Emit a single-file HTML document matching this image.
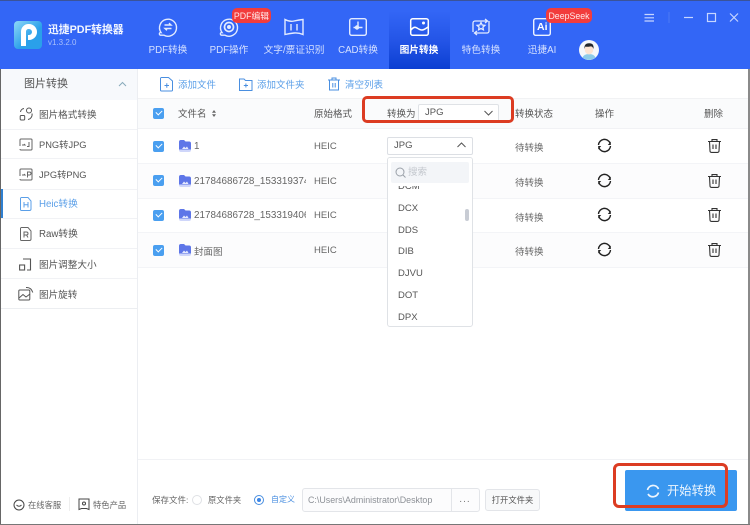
<!DOCTYPE html>
<html><head><meta charset="utf-8"><style>
html,body{margin:0;padding:0}
body{width:750px;height:525px;overflow:hidden;background:#fff;position:relative;font-family:"Liberation Sans","Noto Sans CJK SC",sans-serif;color:#555}
.a{position:absolute;white-space:nowrap}
svg{position:absolute;overflow:visible;fill:none}
.nav{position:absolute;top:44px;font-size:9.7px;line-height:14px;color:#d6e1ff;text-align:center;white-space:nowrap}
.side{position:absolute;left:39px;font-size:9.6px;line-height:14px;color:#555;white-space:nowrap}
.line{position:absolute;height:1px;background:#f1f2f5}
.cb{position:absolute;left:153px;width:11px;height:11px;background:#4a9ff0;border-radius:2px}
.cb:after{content:"";position:absolute;left:2.500px;top:2px;width:5px;height:3px;border-left:1.400px solid #fff;border-bottom:1.400px solid #fff;transform:rotate(-45deg)}
.t{position:absolute;font-size:9.500px;line-height:14px;color:#666;white-space:nowrap}
.opt{position:absolute;font-size:9.500px;line-height:14px;color:#555}
</style></head><body>

<div class="a" style="left:0;top:0;width:750px;height:69px;background:#3366f6"></div>
<div class="a" style="left:0;top:0;width:750px;height:1px;background:#3a5399"></div>
<div class="a" style="left:389px;top:1px;width:61px;height:68px;background:linear-gradient(#3366f6 15%,#2354e6 60%,#0b3fd2)"></div>

<!-- logo -->
<div class="a" style="left:14px;top:21px;width:28px;height:28px;border-radius:4px;background:linear-gradient(135deg,#8fd8f7,#2aa0ea 60%)"></div>
<svg style="left:14px;top:21px" width="28" height="28"><path d="M9.500 25V10.500a5 5 0 0 1 5-5h.5a5.500 5.500 0 0 1 0 11H14" stroke="#fff" stroke-width="5"/></svg>
<div class="a" style="left:48px;top:22px;font-size:10.800px;line-height:16px;font-weight:bold;color:#f2f6ff">迅捷PDF转换器</div>
<div class="a" style="left:48px;top:37px;font-size:8px;line-height:12px;color:#a9c0fb">v1.3.2.0</div>

<!-- nav icons -->
<svg style="left:158px;top:17px" width="20" height="20" stroke="#e3ebff" stroke-width="1.400"><path d="M3 15.500A8.500 8.500 0 1 1 6 18.200H2.500a1.200 1.200 0 0 1 .5-2.700z"/><path d="M6.500 8h6.500l-2-1.800M13.500 11.500H7l2 1.800"/></svg>
<svg style="left:219px;top:17px" width="20" height="20" stroke="#e3ebff" stroke-width="1.400"><path d="M3 15.500A8.500 8.500 0 1 1 6 18.200H2.500a1.200 1.200 0 0 1 .5-2.700z"/><circle cx="10" cy="10" r="4.500" stroke-width="1.700"/><circle cx="10" cy="10" r="1.300" fill="#e3ebff"/></svg>
<svg style="left:284px;top:18px" width="20" height="18" stroke="#e3ebff" stroke-width="1.400"><path d="M1 1.500Q5.500 4 10 3T19 1.500V16.500Q14.500 14.500 10 15T1 16.500zM7 6v6.500M13 6v6.500"/></svg>
<svg style="left:349px;top:18px" width="18" height="18" stroke="#e3ebff" stroke-width="1.400"><rect x=".7" y=".7" width="16.600" height="16.600" rx="2"/><path d="M9 3.500V9M4.500 9.500H13.500"/><circle cx="8" cy="9.500" r="1.500" fill="#e3ebff"/></svg>
<svg style="left:410px;top:18px" width="19" height="18" stroke="#fff" stroke-width="1.500"><rect x=".7" y=".7" width="17.600" height="16.600" rx="2"/><path d="M1 12q3-4 6-2t5 2 6-3"/><circle cx="13.500" cy="5" r="1.500" fill="#fff" stroke="none"/></svg>
<svg style="left:471px;top:17px" width="20" height="19" stroke="#e3ebff" stroke-width="1.300"><path d="M2 15V6a2 2 0 0 1 2-2H16M14 2l2.500 2-2.500 2M18 4v10a2 2 0 0 1-2 2H4M6 14l-2.500 2 2.500 2"/><path d="M10 5.500l1.200 2.500 2.700.3-2 1.800.5 2.700-2.400-1.300-2.400 1.300.5-2.700-2-1.800 2.700-.3z"/></svg>
<svg style="left:533px;top:18px" width="18" height="18" stroke="#eef3ff" stroke-width="1.400"><rect x=".7" y=".7" width="16.600" height="16.600" rx="2"/></svg>
<div class="a" style="left:537px;top:20px;font-size:10.500px;line-height:14px;font-weight:bold;color:#fff">Ai</div>

<div class="nav" style="left:148px;width:40px">PDF转换</div>
<div class="nav" style="left:209px;width:40px">PDF操作</div>
<div class="nav" style="left:259px;width:70px">文字/票证识别</div>
<div class="nav" style="left:338px;width:40px">CAD转换</div>
<div class="nav" style="left:397px;width:44px;color:#fff;font-weight:bold">图片转换</div>
<div class="nav" style="left:461px;width:40px">特色转换</div>
<div class="nav" style="left:522px;width:40px">迅捷AI</div>

<!-- badges -->
<div class="a" style="left:232px;top:8px;width:39px;height:15px;border-radius:5px;background:#f23c3c;color:#ffe9e9;font-size:8.800px;line-height:16px;text-align:center">PDF编辑</div>
<div class="a" style="left:546px;top:8px;width:46px;height:15px;border-radius:5px;background:#f23c3c;color:#ffe9e9;font-size:8.800px;line-height:16px;text-align:center">DeepSeek</div>

<!-- avatar -->
<svg style="left:579px;top:40px" width="20" height="20"><circle cx="10" cy="10" r="10" fill="#f4f7fb"/><path d="M3.500 17.500Q5 14 10 14t6.500 3.500A10 10 0 0 1 3.500 17.500z" fill="#8ccbe8"/><ellipse cx="10" cy="9.500" rx="4.300" ry="5" fill="#fbe3d2"/><path d="M5.500 9Q4.800 3.500 10 3.300T14.500 9Q13.500 6 11 6.500 8 7 6.500 6.500 5.800 7.500 5.500 9z" fill="#22262c"/></svg>

<!-- window controls -->
<svg style="left:644px;top:12px" width="100" height="14" stroke="#c7d6ff" stroke-width="1.200"><path d="M.5 2.500H10M.5 5.800H10M.5 9H10"/><path d="M25 0V11" stroke="#4a78f5"/><path d="M40 5.500H49"/><rect x="63.500" y="1.500" width="8" height="8"/><path d="M86 1.500L94 9.500M94 1.500L86 9.500"/></svg>

<!-- sidebar -->
<div class="a" style="left:1px;top:69px;width:136px;height:31px;background:#f7f9fc"></div>
<div class="a" style="left:24px;top:77px;font-size:11px;line-height:15px;color:#555">图片转换</div>
<svg style="left:118px;top:81px" width="9" height="6" stroke="#8ab" stroke-width="1"><path d="M1 5L4.500 1.500 8 5"/></svg>
<div class="a" style="left:137px;top:69px;width:1px;height:455px;background:#eceef2"></div>

<div class="side" style="top:109px">图片格式转换</div>
<div class="side" style="top:138px;font-size:9.300px">PNG转JPG</div>
<div class="side" style="top:168px;font-size:9.300px">JPG转PNG</div>
<div class="side" style="top:198px;font-size:9.700px;color:#5b9fe8">Heic转换</div>
<div class="side" style="top:228px;font-size:9.700px">Raw转换</div>
<div class="side" style="top:259px">图片调整大小</div>
<div class="side" style="top:289px">图片旋转</div>
<div class="line" style="left:1px;width:136px;top:129px"></div>
<div class="line" style="left:1px;width:136px;top:158px"></div>
<div class="line" style="left:1px;width:136px;top:189px"></div>
<div class="line" style="left:1px;width:136px;top:218px"></div>
<div class="line" style="left:1px;width:136px;top:248px"></div>
<div class="line" style="left:1px;width:136px;top:278px"></div>
<div class="line" style="left:1px;width:136px;top:308px;background:#eceef1"></div>
<div class="a" style="left:1px;top:189px;width:2px;height:29px;background:#2f7fd0"></div>

<svg style="left:19px;top:107px" width="14" height="14" stroke="#555" stroke-width="1"><path d="M1.500 5A4 4 0 0 1 5 1.500"/><circle cx="10" cy="3.500" r="2.500"/><rect x="1.200" y="8.500" width="4.500" height="4.500" rx="1"/><path d="M13 6.500A5 5 0 0 1 9 12.500"/></svg>
<svg style="left:19px;top:138px" width="14" height="13" stroke="#666" stroke-width="1"><path d="M1 8V2a1 1 0 0 1 1-1h10a1 1 0 0 1 1 1v9a1 1 0 0 1-1 1H2a1 1 0 0 1-1-1"/><path d="M3 7h3l-1-1M10 4v4.500H8"/></svg>
<svg style="left:19px;top:168px" width="14" height="13" stroke="#666" stroke-width="1"><path d="M1 8V2a1 1 0 0 1 1-1h10a1 1 0 0 1 1 1v9a1 1 0 0 1-1 1H2a1 1 0 0 1-1-1"/><path d="M3 7h3l-1-1M8.500 9.500V4h2a1.500 1.500 0 0 1 0 3h-2"/></svg>
<svg style="left:20px;top:197px" width="12" height="14" stroke="#5b9fe8" stroke-width="1"><path d="M1.500.5H8L11 4V12a1.500 1.500 0 0 1-1.500 1.500h-8A1 1 0 0 1 .5 12.500V1.500a1 1 0 0 1 1-1zM4 5v5.500M8 5v5.500M4 7.700H8"/></svg>
<svg style="left:20px;top:227px" width="12" height="14" stroke="#666" stroke-width="1"><path d="M1.500.5H8L11 4V12a1.500 1.500 0 0 1-1.500 1.500h-8A1 1 0 0 1 .5 12.500V1.500a1 1 0 0 1 1-1zM4 10.500V5h2.500a1.500 1.500 0 0 1 0 3H4M6.500 8L8 10.500"/></svg>
<svg style="left:19px;top:258px" width="13" height="13" stroke="#555" stroke-width="1.100"><path d="M4 1H11.500V12H8"/><rect x=".6" y="7" width="5" height="5"/></svg>
<svg style="left:18px;top:286px" width="16" height="15" stroke="#555" stroke-width="1"><rect x=".8" y="4" width="11" height="10" rx="1"/><path d="M1 12L5 8.500 8 11 12 8"/><path d="M8 1.500Q13 1 14.800 6.500"/></svg>

<!-- toolbar -->
<svg style="left:160px;top:76px" width="14" height="16" stroke="#4a8fe0" stroke-width="1"><path d="M1.500 1.500H8.500L12.500 5V14a1 1 0 0 1-1 1h-10a1 1 0 0 1-1-1V2.500a1 1 0 0 1 1-1zM4.500 9.500H9M6.800 7.200V11.800"/></svg>
<div class="a" style="left:178px;top:79px;font-size:9.500px;line-height:14px;color:#5b9fe8">添加文件</div>
<svg style="left:239px;top:78px" width="14" height="13" stroke="#4a8fe0" stroke-width="1"><path d="M.5 1H5L6.500 2.500H13V12.500H.5zM4.800 7.500H9M6.900 5.500V9.500"/></svg>
<div class="a" style="left:257px;top:79px;font-size:9.500px;line-height:14px;color:#5b9fe8">添加文件夹</div>
<svg style="left:328px;top:77px" width="12" height="14" stroke="#4a8fe0" stroke-width="1"><path d="M0 3H12M4 3V1H8V3M1.500 3V13H10.500V3M4.800 6V10.500M7.200 6V10.500"/></svg>
<div class="a" style="left:345px;top:79px;font-size:9.500px;line-height:14px;color:#5b9fe8">清空列表</div>

<!-- table head -->
<div class="a" style="left:138px;top:98px;width:610px;height:30px;background:#fafbfc"></div>
<div class="line" style="left:138px;width:610px;top:98px;background:#f1f2f4"></div>
<div class="line" style="left:138px;width:610px;top:128px"></div>
<div class="cb" style="top:108px"></div>
<div class="t" style="left:178px;top:108px;color:#555">文件名</div>
<svg style="left:212px;top:110px" width="4" height="7"><path d="M2 0L4 2.800H0zM2 7L0 4.200H4z" fill="#666"/></svg>
<div class="t" style="left:314px;top:108px;color:#555">原始格式</div>
<div class="t" style="left:387px;top:108px;color:#555">转换为</div>
<div class="a" style="left:418px;top:104px;width:79px;height:17px;border:1px solid #dfe2e6;border-radius:2px;background:#fff"></div>
<div class="a" style="left:425px;top:106px;font-size:9.500px;line-height:14px;color:#555">JPG</div>
<svg style="left:484px;top:110px" width="9" height="6" stroke="#555" stroke-width="1"><path d="M.5 1L4.500 5 8.500 1"/></svg>
<div class="t" style="left:515px;top:108px;color:#555">转换状态</div>
<div class="t" style="left:595px;top:108px;color:#555">操作</div>
<div class="t" style="left:704px;top:108px;color:#555">删除</div>

<!-- rows -->
<div class="a" style="left:138px;top:164px;width:610px;height:34px;background:#fcfcfd"></div>
<div class="a" style="left:138px;top:233px;width:610px;height:34px;background:#fcfcfd"></div>
<div class="line" style="left:138px;width:610px;top:163px;background:#f3f4f7"></div>
<div class="line" style="left:138px;width:610px;top:198px;background:#f3f4f7"></div>
<div class="line" style="left:138px;width:610px;top:232px;background:#f3f4f7"></div>
<div class="line" style="left:138px;width:610px;top:267px;background:#f3f4f7"></div>

<div class="cb" style="top:141px"></div>
<div class="cb" style="top:175px"></div>
<div class="cb" style="top:210px"></div>
<div class="cb" style="top:245px"></div>

<svg style="left:179px;top:140px" width="12" height="12"><path d="M0 2a2 2 0 0 1 2-2h3l1.500 1.500H10a2 2 0 0 1 2 2V10a2 2 0 0 1-2 2H2a2 2 0 0 1-2-2z" fill="#cfd6fa"/><path d="M0 2a2 2 0 0 1 2-2h3l1.500 1.500H10a2 2 0 0 1 2 2V9.500H0z" fill="#5e76e8"/><path d="M3 9L5 6.500 6.500 8 8 6.500 9.500 9z" fill="#e6eafd"/></svg>
<svg style="left:179px;top:175px" width="12" height="12"><path d="M0 2a2 2 0 0 1 2-2h3l1.500 1.500H10a2 2 0 0 1 2 2V10a2 2 0 0 1-2 2H2a2 2 0 0 1-2-2z" fill="#cfd6fa"/><path d="M0 2a2 2 0 0 1 2-2h3l1.500 1.500H10a2 2 0 0 1 2 2V9.500H0z" fill="#5e76e8"/><path d="M3 9L5 6.500 6.500 8 8 6.500 9.500 9z" fill="#e6eafd"/></svg>
<svg style="left:179px;top:209px" width="12" height="12"><path d="M0 2a2 2 0 0 1 2-2h3l1.500 1.500H10a2 2 0 0 1 2 2V10a2 2 0 0 1-2 2H2a2 2 0 0 1-2-2z" fill="#cfd6fa"/><path d="M0 2a2 2 0 0 1 2-2h3l1.500 1.500H10a2 2 0 0 1 2 2V9.500H0z" fill="#5e76e8"/><path d="M3 9L5 6.500 6.500 8 8 6.500 9.500 9z" fill="#e6eafd"/></svg>
<svg style="left:179px;top:244px" width="12" height="12"><path d="M0 2a2 2 0 0 1 2-2h3l1.500 1.500H10a2 2 0 0 1 2 2V10a2 2 0 0 1-2 2H2a2 2 0 0 1-2-2z" fill="#cfd6fa"/><path d="M0 2a2 2 0 0 1 2-2h3l1.500 1.500H10a2 2 0 0 1 2 2V9.500H0z" fill="#5e76e8"/><path d="M3 9L5 6.500 6.500 8 8 6.500 9.500 9z" fill="#e6eafd"/></svg>

<div class="t" style="left:194px;top:140px;font-size:9.900px">1</div>
<div class="t" style="left:194px;top:175px;font-size:9.900px;width:112px;overflow:hidden">21784686728_153319374</div>
<div class="t" style="left:194px;top:209px;font-size:9.900px;width:112px;overflow:hidden">21784686728_153319406</div>
<div class="t" style="left:194px;top:246px;">封面图</div>

<div class="t" style="left:314px;top:140px;font-size:9.500px">HEIC</div>
<div class="t" style="left:314px;top:175px;font-size:9.500px">HEIC</div>
<div class="t" style="left:314px;top:209px;font-size:9.500px">HEIC</div>
<div class="t" style="left:314px;top:244px;font-size:9.500px">HEIC</div>

<div class="t" style="left:515px;top:142px">待转换</div>
<div class="t" style="left:515px;top:177px">待转换</div>
<div class="t" style="left:515px;top:212px">待转换</div>
<div class="t" style="left:515px;top:246px">待转换</div>

<svg style="left:597px;top:138px" width="15" height="15" stroke="#222" stroke-width="1.400"><path d="M1.500 7A6 6 0 0 1 13 5M13.500 8A6 6 0 0 1 2 10"/><path d="M13.800 3.500V7H10.800zM1.200 11.500V8H4.200z" fill="#222" stroke="none"/></svg>
<svg style="left:597px;top:173px" width="15" height="15" stroke="#222" stroke-width="1.400"><path d="M1.500 7A6 6 0 0 1 13 5M13.500 8A6 6 0 0 1 2 10"/><path d="M13.800 3.500V7H10.800zM1.200 11.500V8H4.200z" fill="#222" stroke="none"/></svg>
<svg style="left:597px;top:207px" width="15" height="15" stroke="#222" stroke-width="1.400"><path d="M1.500 7A6 6 0 0 1 13 5M13.500 8A6 6 0 0 1 2 10"/><path d="M13.800 3.500V7H10.800zM1.200 11.500V8H4.200z" fill="#222" stroke="none"/></svg>
<svg style="left:597px;top:242px" width="15" height="15" stroke="#222" stroke-width="1.400"><path d="M1.500 7A6 6 0 0 1 13 5M13.500 8A6 6 0 0 1 2 10"/><path d="M13.800 3.500V7H10.800zM1.200 11.500V8H4.200z" fill="#222" stroke="none"/></svg>

<svg style="left:708px;top:139px" width="13" height="14" stroke="#333" stroke-width="1.100"><path d="M0 2.500H13M4 2.500V.6H9V2.500M1.500 2.500L2 12a1.500 1.500 0 0 0 1.500 1.400h6A1.500 1.500 0 0 0 11 12L11.500 2.500M5 5.500V10M8 5.500V10"/></svg>
<svg style="left:708px;top:174px" width="13" height="14" stroke="#333" stroke-width="1.100"><path d="M0 2.500H13M4 2.500V.6H9V2.500M1.500 2.500L2 12a1.500 1.500 0 0 0 1.500 1.400h6A1.500 1.500 0 0 0 11 12L11.500 2.500M5 5.500V10M8 5.500V10"/></svg>
<svg style="left:708px;top:208px" width="13" height="14" stroke="#333" stroke-width="1.100"><path d="M0 2.500H13M4 2.500V.6H9V2.500M1.500 2.500L2 12a1.500 1.500 0 0 0 1.500 1.400h6A1.500 1.500 0 0 0 11 12L11.500 2.500M5 5.500V10M8 5.500V10"/></svg>
<svg style="left:708px;top:243px" width="13" height="14" stroke="#333" stroke-width="1.100"><path d="M0 2.500H13M4 2.500V.6H9V2.500M1.500 2.500L2 12a1.500 1.500 0 0 0 1.500 1.400h6A1.500 1.500 0 0 0 11 12L11.500 2.500M5 5.500V10M8 5.500V10"/></svg>

<!-- dropdown -->
<div class="a" style="left:387px;top:137px;width:84px;height:16px;border:1px solid #dcdfe4;border-radius:2px;background:#fff"></div>
<div class="a" style="left:394px;top:139px;font-size:9.500px;line-height:14px;color:#555">JPG</div>
<svg style="left:457px;top:142px" width="9" height="6" stroke="#555" stroke-width="1"><path d="M.5 5L4.500 1 8.500 5"/></svg>
<div class="a" style="left:387px;top:157px;width:84px;height:168px;border:1px solid #dfe2e6;border-radius:3px;background:#fff;overflow:hidden">
  <div class="opt" style="left:10px;top:22px">DCM</div>
  <div class="a" style="left:0;top:0;width:84px;height:28px;background:#fff"></div>
  <div class="a" style="left:3px;top:4px;width:78px;height:21px;background:#f3f5f8;border-radius:2px"></div>
  <div class="a" style="left:20px;top:8px;font-size:9.500px;line-height:14px;color:#c4c8ce">搜索</div>
  <div class="opt" style="left:10px;top:44px">DCX</div>
  <div class="opt" style="left:10px;top:66px">DDS</div>
  <div class="opt" style="left:10px;top:87px">DIB</div>
  <div class="opt" style="left:10px;top:109px">DJVU</div>
  <div class="opt" style="left:10px;top:131px">DOT</div>
  <div class="opt" style="left:10px;top:153px">DPX</div>
  <div class="a" style="left:77px;top:51px;width:4px;height:12px;background:#c8ccd4;border-radius:2px"></div>
</div>
<svg style="left:395px;top:167px" width="11" height="11" stroke="#9aa0a8" stroke-width="1"><circle cx="5" cy="5" r="4"/><path d="M8 8L10.500 10.500"/></svg>

<!-- bottom -->
<div class="line" style="left:138px;width:610px;top:459px"></div>
<svg style="left:13px;top:499px" width="12" height="12" stroke="#444" stroke-width="1"><circle cx="6" cy="6" r="5"/><path d="M3.500 6Q6 8.500 8.500 6"/></svg>
<div class="a" style="left:28px;top:498px;font-size:8.300px;line-height:14px;color:#666">在线客服</div>
<div class="a" style="left:69px;top:497px;width:1px;height:14px;background:#eee"></div>
<svg style="left:78px;top:498px" width="12" height="12" stroke="#444" stroke-width="1"><path d="M1 1H11V11.500L8.500 10.500H3.500L1 11.500z"/><circle cx="6" cy="5.500" r="1.500"/></svg>
<div class="a" style="left:93px;top:498px;font-size:8.300px;line-height:14px;color:#666">特色产品</div>

<div class="a" style="left:152px;top:493px;font-size:8.500px;line-height:14px;color:#666">保存文件:</div>
<div class="a" style="left:192px;top:495px;width:8px;height:8px;border:1px solid #dfe1e5;border-radius:50%"></div>
<div class="a" style="left:208px;top:493px;font-size:8.300px;line-height:14px;color:#666">原文件夹</div>
<div class="a" style="left:254px;top:495px;width:8px;height:8px;border:1px solid #4a8fe0;border-radius:50%"></div>
<div class="a" style="left:257px;top:498px;width:4px;height:4px;background:#3a85e6;border-radius:50%"></div>
<div class="a" style="left:271px;top:493px;font-size:8px;line-height:14px;color:#4a8fe0">自定义</div>
<div class="a" style="left:302px;top:488px;width:176px;height:22px;border:1px solid #e3e5e9;border-radius:3px;background:#fcfcfd"></div>
<div class="a" style="left:451px;top:488px;width:1px;height:24px;background:#e3e5e9"></div>
<div class="a" style="left:308px;top:494px;font-size:8.900px;line-height:12px;color:#8d9197">C:\Users\Administrator\Desktop</div>
<div class="a" style="left:459px;top:496px;font-size:10px;line-height:12px;color:#777;letter-spacing:.5px">···</div>
<div class="a" style="left:485px;top:489px;width:53px;height:20px;border:1px solid #e3e5e9;border-radius:3px;background:#f8f9fa;font-size:8.300px;line-height:20px;text-align:center;color:#555">打开文件夹</div>

<div class="a" style="left:625px;top:470px;width:112px;height:41px;background:#3a97ef;border-radius:2px"></div>
<svg style="left:646px;top:484px" width="14" height="14" stroke="#eef6fe" stroke-width="1.700"><path d="M1.500 6A5.800 5.800 0 0 1 12.500 5M12.500 8.500A5.800 5.800 0 0 1 2 10"/></svg>
<div class="a" style="left:667px;top:483px;font-size:12.300px;line-height:17px;color:#eef6fe">开始转换</div>

<!-- red highlight boxes -->
<div class="a" style="left:362px;top:96px;width:146px;height:21px;border:3px solid #dc3c22;border-radius:5px"></div>
<div class="a" style="left:613px;top:463px;width:109px;height:39px;border:3px solid #dc3c22;border-radius:6px"></div>

<!-- window border -->
<div class="a" style="left:0;top:69px;width:1px;height:456px;background:#666"></div>
<div class="a" style="left:748px;top:69px;width:2px;height:456px;background:#8a8a8a"></div>
<div class="a" style="left:0;top:524px;width:750px;height:1px;background:#777"></div>
</body></html>
